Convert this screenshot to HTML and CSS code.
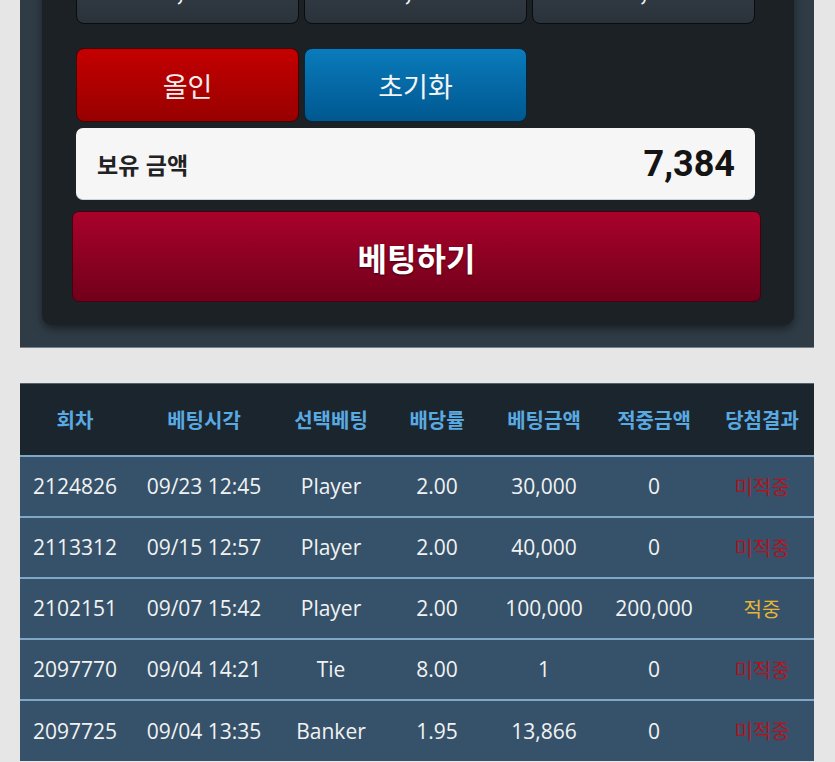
FILE: index.html
```html
<!DOCTYPE html>
<html lang="ko">
<head>
    <meta charset="UTF-8">
    <meta name="viewport" content="width=device-width, initial-scale=1.0">
    <title>베팅</title>
    <link rel="stylesheet" href="styles.css">
</head>
<body>
    <div class="bet-panel">
        <div class="bet-card">
            <div class="chip-grid">
                <button class="chip-btn chip-amount">10,000</button>
                <button class="chip-btn chip-amount">50,000</button>
                <button class="chip-btn chip-amount">100,000</button>
                <button class="chip-btn btn-allin">올인</button>
                <button class="chip-btn btn-reset">초기화</button>
            </div>

            <div class="balance-box">
                <span class="balance-label">보유 금액</span>
                <span class="balance-value">7,384</span>
            </div>

            <button class="bet-btn">베팅하기</button>
        </div>
    </div>

    <table class="history-table">
        <colgroup>
            <col style="width: 110px">
            <col style="width: 148px">
            <col style="width: 106px">
            <col style="width: 106px">
            <col style="width: 108px">
            <col style="width: 112px">
            <col style="width: 104px">
        </colgroup>
        <thead>
            <tr>
                <th>회차</th>
                <th>베팅시각</th>
                <th>선택베팅</th>
                <th>배당률</th>
                <th>베팅금액</th>
                <th>적중금액</th>
                <th>당첨결과</th>
            </tr>
        </thead>
        <tbody>
            <tr>
                <td>2124826</td>
                <td>09/23 12:45</td>
                <td>Player</td>
                <td>2.00</td>
                <td>30,000</td>
                <td>0</td>
                <td class="result-lose">미적중</td>
            </tr>
            <tr>
                <td>2113312</td>
                <td>09/15 12:57</td>
                <td>Player</td>
                <td>2.00</td>
                <td>40,000</td>
                <td>0</td>
                <td class="result-lose">미적중</td>
            </tr>
            <tr>
                <td>2102151</td>
                <td>09/07 15:42</td>
                <td>Player</td>
                <td>2.00</td>
                <td>100,000</td>
                <td>200,000</td>
                <td class="result-win">적중</td>
            </tr>
            <tr>
                <td>2097770</td>
                <td>09/04 14:21</td>
                <td>Tie</td>
                <td>8.00</td>
                <td>1</td>
                <td>0</td>
                <td class="result-lose">미적중</td>
            </tr>
            <tr>
                <td>2097725</td>
                <td>09/04 13:35</td>
                <td>Banker</td>
                <td>1.95</td>
                <td>13,866</td>
                <td>0</td>
                <td class="result-lose">미적중</td>
            </tr>
        </tbody>
    </table>
</body>
</html>
```

FILE: styles.css
```css
* {
    margin: 0;
    padding: 0;
    box-sizing: border-box;
}

body {
    font-family: "Noto Sans CJK KR", "Noto Sans", sans-serif;
    background-color: #e6e6e6;
    overflow: hidden;
}

.bet-panel {
    margin: -102px 21px 0 20px;
    padding: 22px 20px 22px 22px;
    background-color: #2f3c46;
    border-bottom: 1px solid #74838e;
}

.bet-card {
    background-color: #1c2125;
    border-radius: 10px;
    padding: 30px 39px 23px 34px;
    box-shadow: 0 4px 8px rgba(0, 0, 0, 0.45);
}

.chip-grid {
    display: grid;
    grid-template-columns: repeat(3, 1fr);
    column-gap: 5px;
    row-gap: 24px;
    margin-bottom: 6px;
}

.chip-btn {
    height: 74px;
    border: 1px solid #0a0c0e;
    border-radius: 8px;
    background: linear-gradient(#3b4650, #2a323a);
    color: #f2f2f2;
    font-family: "Noto Sans CJK KR", sans-serif;
    font-size: 27px;
    cursor: pointer;
}

.chip-amount {
    padding-top: 3px;
}

.btn-allin {
    background: linear-gradient(#c40000, #980000);
    border-color: #4a0000;
    color: #f4eeee;
}

.btn-reset {
    background: linear-gradient(#0a7bbb, #005890);
    border-color: #06243a;
    color: #f4f4f4;
}

.balance-box {
    display: flex;
    justify-content: space-between;
    align-items: center;
    height: 72px;
    padding: 0 20px 0 21px;
    background-color: #f6f6f6;
    border-radius: 7px;
    border-bottom: 1px solid #c9d3e3;
    margin-bottom: 11px;
}

.balance-label {
    font-size: 23px;
    font-weight: 700;
    color: #222;
}

.balance-value {
    font-family: Roboto, "Liberation Sans", sans-serif;
    font-size: 36px;
    font-weight: 700;
    color: #141414;
}

.bet-btn {
    display: block;
    width: calc(100% + 10px);
    height: 91px;
    margin: 0 -6px 0 -4px;
    border: 1px solid #45000f;
    border-radius: 7px;
    background: linear-gradient(#a9022b, #71001a);
    color: #fff;
    font-family: "Noto Sans CJK KR", sans-serif;
    font-size: 32px;
    font-weight: 700;
    text-shadow: 0 1px 2px rgba(0, 0, 0, 0.5);
    cursor: pointer;
}

.history-table {
    width: 794px;
    margin: 35px 0 0 20px;
    border-collapse: collapse;
    table-layout: fixed;
}

.history-table th {
    height: 72px;
    background-color: #1b252e;
    border-top: 1px solid #55616b;
    color: #5aaae2;
    font-size: 20px;
    font-weight: 700;
    text-align: center;
}

.history-table td {
    height: 61px;
    background-color: #36526a;
    border-top: 2px solid #80a7c6;
    color: #f2f2f2;
    font-family: "Open Sans", "Noto Sans CJK KR", sans-serif;
    font-size: 21px;
    text-align: center;
    white-space: nowrap;
}

.history-table td.result-lose,
.history-table td.result-win {
    font-family: "Noto Sans CJK KR", sans-serif;
    font-size: 20px;
}

.history-table td.result-lose {
    color: #b3121f;
}

.history-table td.result-win {
    color: #e8b634;
}
```
